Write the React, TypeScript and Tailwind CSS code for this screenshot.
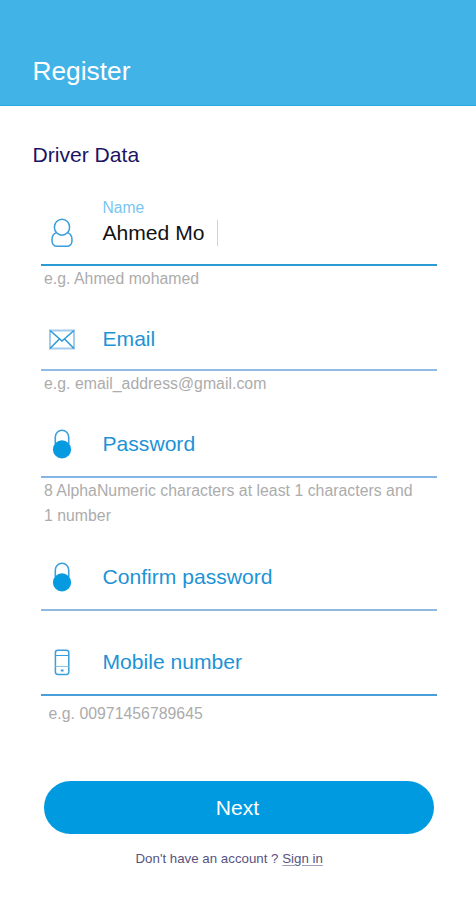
import React from 'react';
import clsx from 'clsx';

const UserIcon: React.FC = () => (
    <svg width="24" height="32" viewBox="0 0 24 32" fill="none" stroke="#3a9fdc" strokeWidth="1.5">
        <ellipse cx="12" cy="10.2" rx="7.6" ry="8" />
        <path d="M6.2 15.6C3.4 16.8 2 19 2 22.6v.8c0 4 1.8 5.8 5.4 5.8h9.2c3.6 0 5.4-1.8 5.4-5.8v-.8c0-3.6-1.4-5.8-4.2-7" />
    </svg>
);

const MailIcon: React.FC = () => (
    <svg width="28" height="22" viewBox="0 0 28 22" fill="none">
        <rect x="2" y="2.5" width="24" height="18" stroke="#a3cbed" strokeWidth="2" />
        <path d="M2 2.5l12 10.5 12-10.5M2 20.5l9.4-9.5M26 20.5l-9.4-9.5" stroke="#2f9ad9" strokeWidth="1.6" />
    </svg>
);

const LockIcon: React.FC = () => (
    <svg width="20" height="30" viewBox="0 0 20 30" fill="none">
        <path d="M3.3 15V8a6.7 6.7 0 0 1 13.4 0V15" stroke="#3a9fdc" strokeWidth="1.6" />
        <circle cx="10" cy="20.4" r="9.1" fill="#069ae0" />
    </svg>
);

const PhoneIcon: React.FC = () => (
    <svg width="16" height="28" viewBox="0 0 16 28" fill="none" stroke="#3a9fdc">
        <rect x="1.4" y="2.3" width="13.4" height="24.2" rx="2.4" strokeWidth="1.5" />
        <path d="M1.4 7.5h13.4" />
        <path d="M1.4 18.5h13.4" stroke="#8dbfe9" />
        <path d="M6.8 22.5h2.8" strokeWidth="2" />
    </svg>
);

interface FieldProps {
    icon: React.ReactNode;
    label: string;
    value?: string;
    hint?: string;
    className?: string;
    rowClassName: string;
    hintClassName?: string;
}

const Field: React.FC<FieldProps> = ({ icon, label, value, hint, className, rowClassName, hintClassName }) => (
    <div className={className}>
        <div className={rowClassName}>
            {value && <div className="pl-[61.5px] text-[15.6px] leading-5 text-[#78c5f0]">{label}</div>}
            <div className={clsx('flex h-7 items-center', value && 'mt-px')}>
                <div className="flex w-[42px] shrink-0 justify-center">{icon}</div>
                <div className={clsx('ml-[19.5px] text-[21.1px] leading-7', value ? 'text-[#111111]' : 'text-[#1d93d5]')}>
                    {value ?? label}
                </div>
                {value && <span className="ml-3 h-[26px] w-px bg-[#b9d6f5]" />}
            </div>
        </div>
        {hint && (
            <p className={clsx('text-[15.8px] leading-[25px] tracking-[0.03px] text-[#acacac]', hintClassName)}>{hint}</p>
        )}
    </div>
);

export default function App() {
    return (
        <div className="min-h-[900px] w-full bg-white font-['Liberation_Sans',Arial,sans-serif]">
            <header className="h-[106px] border-b border-[#22a9e2] bg-[#42b3e6] pl-[32.5px] pt-[55px]">
                <h1 className="text-[26.3px] leading-8 text-white">Register</h1>
            </header>

            <main className="pt-[35px]">
                <h2 className="pl-[32.5px] text-[21.1px] leading-7 text-[#1b1464]">Driver Data</h2>

                <form className="ml-[41px] w-[395.5px]">
                    <Field
                        icon={<UserIcon />}
                        label="Name"
                        value="Ahmed Mo"
                        hint="e.g. Ahmed mohamed"
                        className="mt-[29px]"
                        rowClassName="h-[68px] border-b-2 border-[#2b9bd3]"
                        hintClassName="pl-[3px]"
                    />
                    <Field
                        icon={<MailIcon />}
                        label="Email"
                        hint="e.g. email_address@gmail.com"
                        className="mt-[34px]"
                        rowClassName="h-[46px] border-b-2 border-[#8fbbe4]"
                        hintClassName="pl-[3px]"
                    />
                    <Field
                        icon={<LockIcon />}
                        label="Password"
                        hint="8 AlphaNumeric characters at least 1 characters and 1 number"
                        className="mt-[34px]"
                        rowClassName="h-[48px] border-b-2 border-[#83b6e5]"
                        hintClassName="pl-[3px] pr-4"
                    />
                    <Field
                        icon={<LockIcon />}
                        label="Confirm password"
                        className="mt-[35px]"
                        rowClassName="h-[48px] border-b-2 border-[#8fb9df]"
                    />
                    <Field
                        icon={<PhoneIcon />}
                        label="Mobile number"
                        hint="e.g. 00971456789645"
                        className="mt-[37px]"
                        rowClassName="h-[48px] border-b-2 border-[#4a9fda]"
                        hintClassName="pl-[7.5px] pt-[5px]"
                    />

                    <button
                        type="button"
                        className="ml-[3px] mt-[55px] block h-[53px] w-[390px] rounded-full bg-[#009ae0] pr-[3px] text-[21.1px] leading-7 text-white"
                    >
                        Next
                    </button>
                </form>

                <p className="mt-[15px] pl-[135.5px] text-[13.3px] leading-5 text-[#57527f]">
                    Don't have an account ? <a className="underline decoration-[#a09dbb] underline-offset-2">Sign in</a>
                </p>
            </main>
        </div>
    );
}
